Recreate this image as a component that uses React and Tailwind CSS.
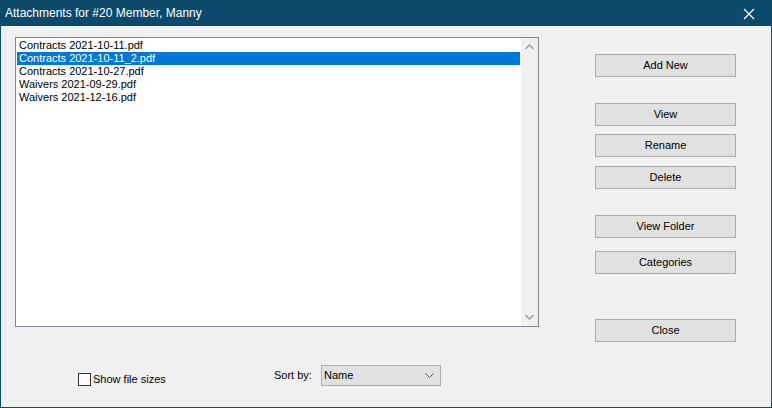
import { useState } from "react";

const files = [
  "Contracts 2021-10-11.pdf",
  "Contracts 2021-10-11_2.pdf",
  "Contracts 2021-10-27.pdf",
  "Waivers 2021-09-29.pdf",
  "Waivers 2021-12-16.pdf",
];

function Btn({ label, className = "" }) {
  return (
    <button
      className={`w-[141px] h-[23px] bg-[#e1e1e1] border border-[#adadad] text-[11px] text-black leading-none ${className}`}
    >
      {label}
    </button>
  );
}

export default function App() {
  const [selected, setSelected] = useState(1);
  const [showSizes, setShowSizes] = useState(false);

  return (
    <div
      className="w-[772px] h-[408px] flex flex-col bg-[#f0f0f0] border-x border-b border-[#0b4a6b] overflow-hidden"
      style={{ fontFamily: '"Liberation Sans", Arial, sans-serif' }}
    >
      {/* title bar */}
      <div className="h-[26px] shrink-0 bg-[#0b4a6b] flex items-center justify-between pl-[4px] pr-[16px] text-white">
        <span className="text-[12px]">Attachments for #20 Member, Manny</span>
        <svg width="12" height="12" viewBox="0 0 12 12" className="mt-[1px]">
          <path d="M1 1 L11 11 M11 1 L1 11" stroke="white" strokeWidth="1.3" />
        </svg>
      </div>

      <div className="flex flex-1">
        <div className="flex flex-col pl-[14px] pt-[11px]">
          {/* listbox */}
          <div className="w-[524px] h-[290px] bg-white border border-[#828790] flex">
            <div className="flex-1 pt-[1px] pl-[1px] pr-[1px] text-[11px] leading-[13px] text-black">
              {files.map((f, i) => (
                <div
                  key={f}
                  onClick={() => setSelected(i)}
                  className={`h-[13px] pl-[2px] whitespace-nowrap ${
                    i === selected ? "bg-[#0078d7] text-white" : ""
                  }`}
                >
                  {f}
                </div>
              ))}
            </div>
            <div className="w-[17px] bg-[#f0f0f0] flex flex-col justify-between items-center py-[6px]">
              <svg width="9" height="6" viewBox="0 0 9 6">
                <path d="M0.5 5 L4.5 1 L8.5 5" fill="none" stroke="#a3a3a3" strokeWidth="1.6" />
              </svg>
              <svg width="9" height="6" viewBox="0 0 9 6">
                <path d="M0.5 1 L4.5 5 L8.5 1" fill="none" stroke="#a3a3a3" strokeWidth="1.6" />
              </svg>
            </div>
          </div>

          {/* bottom controls */}
          <div className="flex items-start mt-[38px] text-[11px] text-black">
            <label className="flex items-center ml-[63px] mt-[6px] w-[196px]">
              <span
                onClick={() => setShowSizes(!showSizes)}
                className="w-[13px] h-[13px] border border-[#333333] bg-white mr-[2px] flex items-center justify-center"
              >
                {showSizes && (
                  <svg width="9" height="9" viewBox="0 0 9 9">
                    <path d="M1 4.5 L3.5 7 L8 1.5" fill="none" stroke="#333" strokeWidth="1.4" />
                  </svg>
                )}
              </span>
              Show file sizes
            </label>
            <span className="mt-[2px] w-[47px]">Sort by:</span>
            <div className="w-[120px] h-[21px] bg-[#e1e1e1] border border-[#adadad] flex items-center justify-between pl-[2px] pr-[6px]">
              <span>Name</span>
              <svg width="9" height="5" viewBox="0 0 9 5">
                <path d="M0.5 0.5 L4.5 4.5 L8.5 0.5" fill="none" stroke="#555" strokeWidth="1" />
              </svg>
            </div>
          </div>
        </div>

        {/* buttons */}
        <div className="flex flex-col ml-[56px] pt-[28px]">
          <Btn label="Add New" />
          <Btn label="View" className="mt-[26px]" />
          <Btn label="Rename" className="mt-[8px]" />
          <Btn label="Delete" className="mt-[9px]" />
          <Btn label="View Folder" className="mt-[26px]" />
          <Btn label="Categories" className="mt-[13px]" />
          <Btn label="Close" className="mt-[45px]" />
        </div>
      </div>
    </div>
  );
}
